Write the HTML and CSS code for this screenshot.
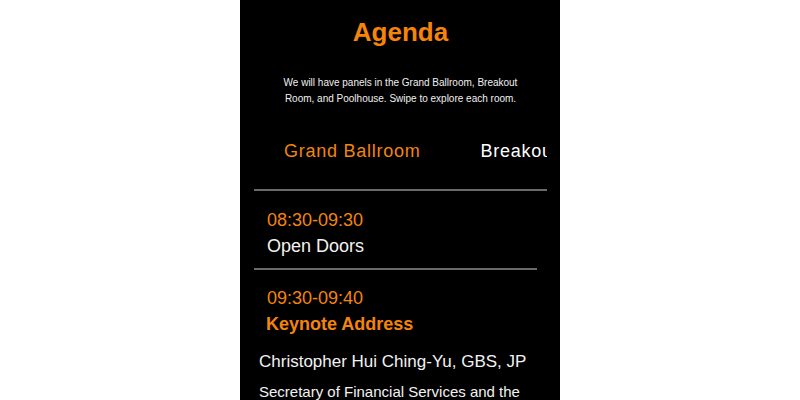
FILE: index.html
```html
<!DOCTYPE html>
<html lang="en">
<head>
<meta charset="utf-8">
<title>Agenda</title>
<link rel="stylesheet" href="styles.css">
</head>
<body>
<div class="phone">
  <h1 class="title">Agenda</h1>
  <p class="intro">We will have panels in the Grand Ballroom, Breakout<br>Room, and Poolhouse. Swipe to explore each room.</p>
  <div class="tabs">
    <div class="tab active">Grand Ballroom</div>
    <div class="tab">Breakout Room</div>
    <div class="tab">Poolhouse</div>
  </div>
  <div class="agenda">
    <div class="item divided">
      <div class="time">08:30-09:30</div>
      <div class="name">Open Doors</div>
    </div>
    <div class="item">
      <div class="time">09:30-09:40</div>
      <div class="name highlight">Keynote Address</div>
      <div class="speaker">Christopher Hui Ching-Yu, GBS, JP</div>
      <div class="role">Secretary of Financial Services and the Treasury</div>
    </div>
  </div>
</div>
</body>
</html>
```
FILE: styles.css
```css
html, body {
  margin: 0;
  padding: 0;
  background: #ffffff;
}
body {
  font-family: "Liberation Sans", Arial, sans-serif;
}
.phone {
  width: 320px;
  height: 400px;
  margin: 0 auto;
  background: #000;
  overflow: hidden;
  padding: 0 13px 0 14px;
  box-sizing: border-box;
}
.title {
  margin: 0;
  padding-top: 17px;
  font-size: 26px;
  line-height: 30px;
  font-weight: bold;
  color: #f5840c;
  text-align: center;
}
.intro {
  margin: 28px 0 0;
  font-size: 10px;
  line-height: 16px;
  color: #f0f0f0;
  text-align: center;
}
.tabs {
  display: flex;
  flex-wrap: nowrap;
  overflow: hidden;
  margin-top: 33px;
}
.tab {
  flex: 0 0 auto;
  padding: 0 30px 27px;
  font-size: 18px;
  line-height: 22px;
  letter-spacing: 0.75px;
  color: #ffffff;
  border-bottom: 2px solid #6a6a6a;
  white-space: nowrap;
}
.tab.active {
  color: #f5840c;
}
.agenda {
  margin-right: 10px;
}
.item {
  padding: 16px 0 9px;
}
.item + .item {
  padding-top: 15px;
}
.item.divided {
  border-bottom: 2px solid #6a6a6a;
}
.time {
  padding-left: 13px;
  font-size: 18px;
  line-height: 26px;
  color: #f5840c;
}
.name {
  padding-left: 13px;
  font-size: 18px;
  line-height: 26px;
  color: #f2f2f2;
}
.name.highlight {
  padding-left: 12px;
  font-weight: bold;
  color: #f5840c;
}
.speaker {
  margin-top: 10px;
  padding-left: 5px;
  font-size: 17px;
  line-height: 30px;
  color: #f2f2f2;
}
.role {
  padding-left: 5px;
  font-size: 15px;
  line-height: 30px;
  color: #f2f2f2;
}
```
